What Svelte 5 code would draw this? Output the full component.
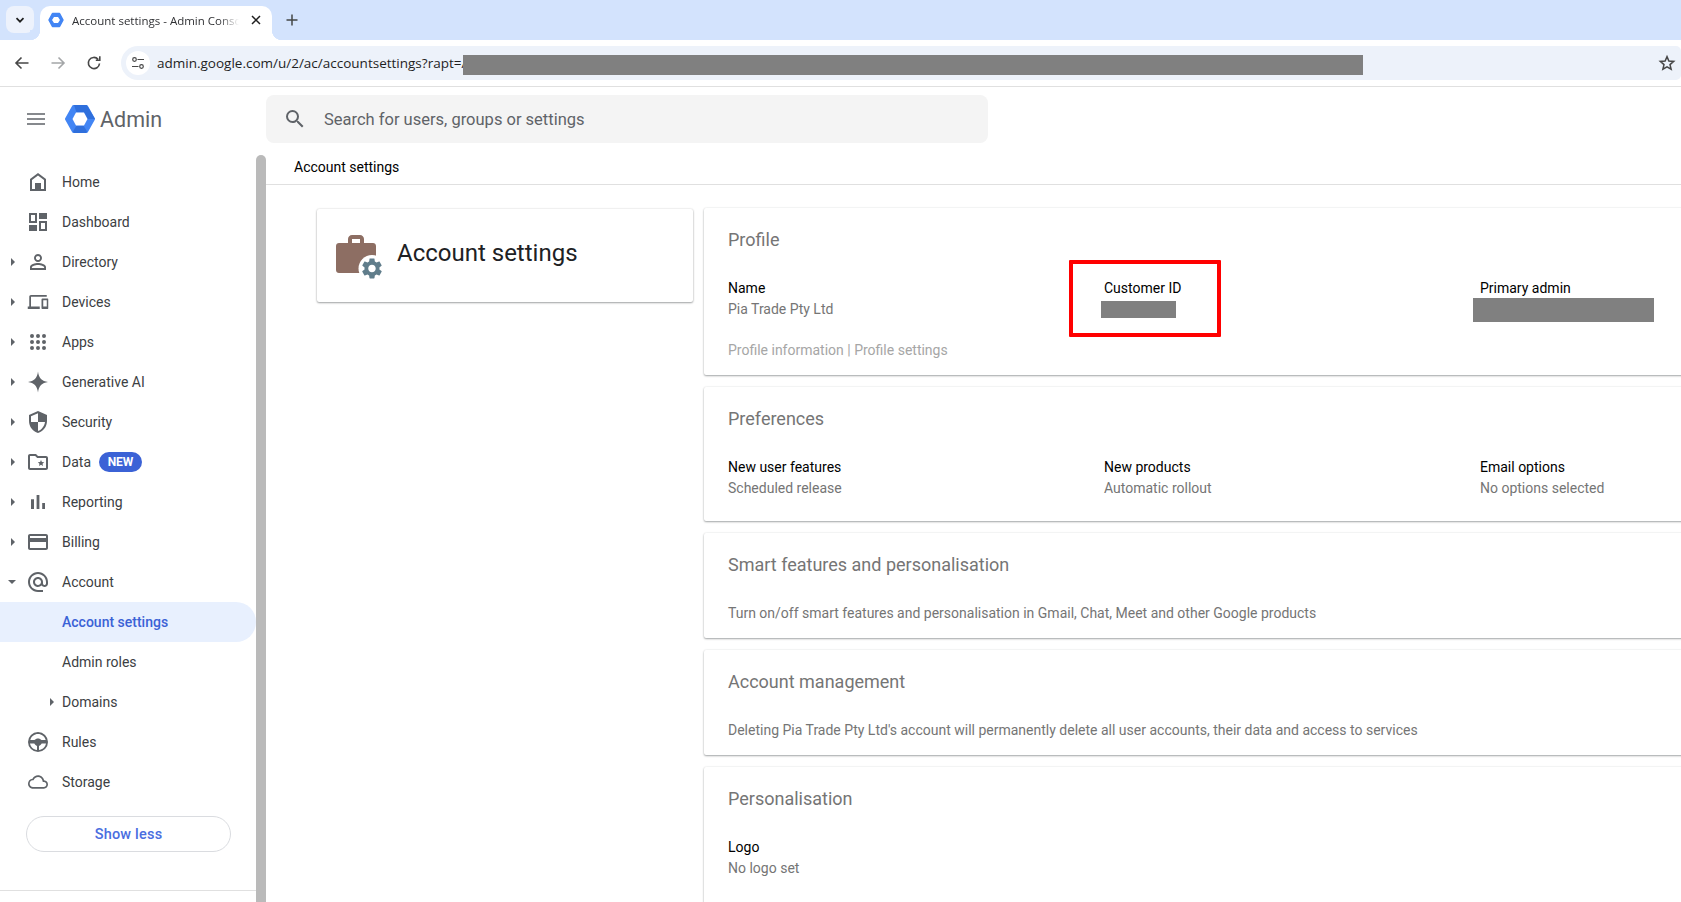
<script>
  const icons = {
    home: "M12 3 4 9v12h16V9L12 3zm0 2.400L18 10v9H6v-9l6-4.600zM9 13h6v6H9z",
    dashboard: "M3 3h8v10H3V3zm2 2v6h4V5H5zm8-2h8v6h-8V3zM3 15h8v6H3v-6zm10-4h8v10h-8V11zm2 2v6h4v-6h-4z",
    directory: "M12 5.900c1.160 0 2.100.94 2.100 2.100s-.94 2.100-2.100 2.100S9.900 9.160 9.900 8s.94-2.100 2.100-2.100m0 9c2.970 0 6.100 1.460 6.100 2.100v1.100H5.900V17c0-.64 3.130-2.100 6.100-2.100M12 4C9.790 4 8 5.790 8 8s1.790 4 4 4 4-1.790 4-4-1.790-4-4-4zm0 9c-2.670 0-8 1.340-8 4v3h16v-3c0-2.660-5.330-4-8-4z",
    devices: "M4 6h18V4H4c-1.100 0-2 .9-2 2v11H0v3h14v-3H4V6zm19 2h-6c-.55 0-1 .45-1 1v10c0 .55.45 1 1 1h6c.55 0 1-.45 1-1V9c0-.55-.45-1-1-1zm-1 9h-4v-7h4v7z",
    apps: "M6 4a2 2 0 1 0 0 4 2 2 0 0 0 0-4zm6 0a2 2 0 1 0 0 4 2 2 0 0 0 0-4zm6 0a2 2 0 1 0 0 4 2 2 0 0 0 0-4zM6 10a2 2 0 1 0 0 4 2 2 0 0 0 0-4zm6 0a2 2 0 1 0 0 4 2 2 0 0 0 0-4zm6 0a2 2 0 1 0 0 4 2 2 0 0 0 0-4zM6 16a2 2 0 1 0 0 4 2 2 0 0 0 0-4zm6 0a2 2 0 1 0 0 4 2 2 0 0 0 0-4zm6 0a2 2 0 1 0 0 4 2 2 0 0 0 0-4z",
    spark: "M12 1.500C12.700 8 16 11.300 22 12c-6 .7-9.300 4-10 10.500C11.300 16 8 12.700 2 12c6-.7 9.300-4 10-10.500z",
    security: "M12 1 3 5v6c0 5.550 3.840 10.740 9 12 5.160-1.260 9-6.450 9-12V5l-9-4zm0 10.990h7c-.53 4.120-3.280 7.790-7 8.940V12H5V6.300l7-3.110v8.800z",
    data: "M20 6h-8l-2-2H4c-1.100 0-2 .9-2 2v12c0 1.100.9 2 2 2h16c1.100 0 2-.9 2-2V8c0-1.100-.9-2-2-2zm0 12H4V6h5.170l2 2H20v10zM15 10l.9 2.100 2.300.2-1.700 1.500.5 2.200-2-1.200-2 1.200.5-2.200-1.700-1.500 2.300-.2z",
    reporting: "M5 9.200h3V19H5zM10.600 5h2.800v14h-2.800zm5.600 8H19v6h-2.800z",
    billing: "M20 4H4c-1.110 0-1.990.89-1.990 2L2 18c0 1.110.89 2 2 2h16c1.110 0 2-.89 2-2V6c0-1.110-.89-2-2-2zm0 14H4v-6h16v6zm0-10H4V6h16v2z",
    account: "M12 2C6.480 2 2 6.480 2 12s4.480 10 10 10h5v-2h-5c-4.340 0-8-3.660-8-8s3.660-8 8-8 8 3.660 8 8v1.430c0 .79-.71 1.570-1.500 1.570s-1.500-.78-1.500-1.570V12c0-2.760-2.240-5-5-5s-5 2.240-5 5 2.240 5 5 5c1.380 0 2.640-.56 3.540-1.470.65.89 1.770 1.470 2.960 1.470 1.970 0 3.500-1.600 3.500-3.570V12c0-5.520-4.480-10-10-10zm0 13c-1.660 0-3-1.340-3-3s1.340-3 3-3 3 1.340 3 3-1.340 3-3 3z",
    rules: "M12 2a10 10 0 1 0 0 20 10 10 0 0 0 0-20zm0 2c3.700 0 6.800 2.500 7.700 6h-4.200c-.9-.9-2.100-1.500-3.500-1.500S9.400 9.100 8.500 10H4.300C5.200 6.500 8.300 4 12 4zm-8 9.500h4.300c.6 1.200 1.700 2.100 2.700 2.500v4c-3.500-.4-6.300-3-7-6.500zm9 6.500v-4c1-.4 2.100-1.300 2.700-2.500H20c-.7 3.500-3.500 6.100-7 6.500z",
    storage: "M12 6c2.620 0 4.880 1.860 5.390 4.430l.3 1.500 1.530.11c1.560.1 2.780 1.410 2.780 2.960 0 1.650-1.350 3-3 3H6c-2.210 0-4-1.790-4-4 0-2.050 1.530-3.760 3.560-3.970l1.070-.11.5-.95C8.080 7.140 9.940 6 12 6m0-2C9.110 4 6.600 5.640 5.350 8.040 2.340 8.360 0 10.910 0 14c0 3.310 2.690 6 6 6h13c2.760 0 5-2.240 5-5 0-2.640-2.050-4.780-4.650-4.960C18.670 6.590 15.640 4 12 4z",
  };

  const nav = [
    { label: "Home", icon: "home" },
    { label: "Dashboard", icon: "dashboard" },
    { label: "Directory", icon: "directory", arrow: "right" },
    { label: "Devices", icon: "devices", arrow: "right", size: 21 },
    { label: "Apps", icon: "apps", arrow: "right" },
    { label: "Generative AI", icon: "spark", arrow: "right" },
    { label: "Security", icon: "security", arrow: "right" },
    { label: "Data", icon: "data", arrow: "right", badge: "NEW" },
    { label: "Reporting", icon: "reporting", arrow: "right" },
    { label: "Billing", icon: "billing", arrow: "right" },
    { label: "Account", icon: "account", arrow: "down" },
    { label: "Account settings", active: true },
    { label: "Admin roles" },
    { label: "Domains", arrow: "sub" },
    { label: "Rules", icon: "rules" },
    { label: "Storage", icon: "storage", size: 20 },
  ];

  const prefs = [
    { label: "New user features", value: "Scheduled release" },
    { label: "New products", value: "Automatic rollout" },
    { label: "Email options", value: "No options selected" },
  ];
</script>

<div class="browser">
  <div class="tabstrip">
    <button class="tabsearch" aria-label="Search tabs">
      <svg width="12" height="12" viewBox="0 0 12 12"><path d="M2.500 4.200 6 7.700l3.500-3.500" fill="none" stroke="#1f1f1f" stroke-width="1.700"/></svg>
    </button>
    <div class="tab">
      <svg class="favicon" width="16" height="16" viewBox="0 0 32 32">
        <polygon points="9,3 23,3 30,16 23,29 9,29 2,16" fill="#4285f4" stroke="#4285f4" stroke-width="3" stroke-linejoin="round"/>
        <polygon points="12,10 20,10 24,16 20,22 12,22 8,16" fill="#fff"/>
      </svg>
      <span class="tabtitle">Account settings - Admin Console</span>
      <svg class="tabclose" width="12" height="12" viewBox="0 0 12 12"><path d="M2 2l8 8M10 2l-8 8" stroke="#1f1f1f" stroke-width="1.500"/></svg>
    </div>
    <svg class="newtab" width="14" height="14" viewBox="0 0 14 14"><path d="M7 1.500v11M1.500 7h11" stroke="#444746" stroke-width="1.500"/></svg>
  </div>

  <div class="toolbar">
    <svg class="tool" width="18" height="18" viewBox="0 0 18 18"><path d="M15.500 9H3.500M8.500 3.500 3 9l5.500 5.500" fill="none" stroke="#474747" stroke-width="1.600"/></svg>
    <svg class="tool" width="18" height="18" viewBox="0 0 18 18"><path d="M2.500 9h12M9.500 3.500 15 9l-5.500 5.500" fill="none" stroke="#a4a6a8" stroke-width="1.600"/></svg>
    <svg class="tool" width="18" height="18" viewBox="0 0 18 18"><path d="M14.500 9.500a5.600 5.600 0 1 1-1.400-4.200M14.800 2.200v4h-4" fill="none" stroke="#474747" stroke-width="1.600"/></svg>
    <div class="urlbar">
      <span class="siteinfo">
        <svg width="14" height="14" viewBox="0 0 14 14" fill="none" stroke="#474747" stroke-width="1.200">
          <circle cx="3.500" cy="3.500" r="1.800"/><path d="M6.500 3.500H13M1 10.500h6.500"/><circle cx="10.500" cy="10.500" r="1.800"/>
        </svg>
      </span>
      <span class="url">admin.google.com/u/2/ac/accountsettings?rapt=A</span>
      <span class="redact urlredact"></span>
      <svg class="star" width="18" height="18" viewBox="0 0 24 24"><path d="M12 3.500l2.500 5.900 6.400.5-4.900 4.200 1.500 6.200L12 17l-5.500 3.300L8 14.100 3.100 9.900l6.400-.5z" fill="none" stroke="#474747" stroke-width="2"/></svg>
    </div>
  </div>

  <div class="page">
    <aside class="sidebar">
      <div class="brand">
        <svg class="burger" width="18" height="12" viewBox="0 0 18 12"><path d="M0 1h18M0 6h18M0 11h18" stroke="#5f6368" stroke-width="1.600"/></svg>
        <svg class="logo" width="30" height="28" viewBox="0 0 30 28">
          <polygon points="8.500,1.500 21.500,1.500 28.500,14 21.500,26.500 8.500,26.500 1.500,14" fill="#4285f4" stroke="#4285f4" stroke-width="3" stroke-linejoin="round"/>
          <polygon points="9,0 21.500,0 23,2 30,14 22,14 18.500,7.500 11.500,7.500" fill="#2f6fdc"/>
          <polygon points="11.500,20.500 18.500,20.500 22,26.500 21,28 9,28 8,26.500" fill="#2f6fdc"/>
          <polygon points="11,7.500 19,7.500 22.500,14 19,20.500 11,20.500 7.500,14" fill="#fff"/>
        </svg>
        <span class="brandname">Admin</span>
      </div>
      <nav>
        {#each nav as item}
          <div class="navrow" class:active={item.active}>
            {#if item.arrow === "right"}<span class="arrow"></span>{/if}
            {#if item.arrow === "down"}<span class="arrow down"></span>{/if}
            {#if item.arrow === "sub"}<span class="arrow sub"></span>{/if}
            {#if item.icon}
              <svg class="navicon" width={item.size ?? 24} height={item.size ?? 24} viewBox="0 0 24 24"><path fill-rule="evenodd" d={icons[item.icon]}/></svg>
            {/if}
            <span class="navlabel">{item.label}</span>
            {#if item.badge}<span class="badge">{item.badge}</span>{/if}
          </div>
        {/each}
      </nav>
      <button class="showless">Show less</button>
      <div class="sidefoot"></div>
    </aside>
    <div class="scrollbar"></div>

    <main>
      <div class="search">
        <svg width="24" height="24" viewBox="0 0 24 24"><path fill="#5f6368" d="M15.500 14h-.79l-.28-.27A6.470 6.470 0 0 0 16 9.500 6.500 6.500 0 1 0 9.500 16c1.610 0 3.090-.59 4.230-1.570l.27.28v.79l5 4.990L20.490 19l-4.990-5zm-6 0C7.010 14 5 11.990 5 9.500S7.010 5 9.500 5 14 7.010 14 9.500 11.990 14 9.500 14z"/></svg>
        <span>Search for users, groups or settings</span>
      </div>
      <div class="crumb">Account settings</div>

      <div class="content">
        <section class="herocard">
          <svg class="heroicon" width="46" height="44" viewBox="0 0 46 44">
            <path fill="#8d6e63" fill-rule="evenodd" d="M12 4c0-2.200 1.800-4 4-4h8c2.200 0 4 1.800 4 4v4h9c1.700 0 3 1.300 3 3v24c0 1.700-1.300 3-3 3H3c-1.700 0-3-1.300-3-3V11c0-1.700 1.300-3 3-3h9V4zm4 0v4h8V4h-8z"/>
            <circle cx="36" cy="33.500" r="13.500" fill="#fff"/>
            <path fill="#607d8b" transform="translate(23.500 21) scale(1.040)" d="M19.140 12.940c.04-.3.06-.61.06-.94 0-.32-.02-.64-.07-.94l2.030-1.580c.18-.14.23-.41.12-.61l-1.920-3.320c-.12-.22-.37-.29-.59-.22l-2.390.96c-.5-.38-1.030-.7-1.620-.94l-.36-2.540c-.04-.24-.24-.41-.48-.41h-3.840c-.24 0-.43.17-.47.41l-.36 2.540c-.59.24-1.130.57-1.620.94l-2.390-.96c-.22-.08-.47 0-.59.22L2.740 8.870c-.12.21-.08.47.12.61l2.030 1.580c-.05.3-.09.63-.09.94s.02.64.07.94l-2.030 1.580c-.18.14-.23.41-.12.61l1.920 3.320c.12.22.37.29.59.22l2.390-.96c.5.38 1.030.7 1.620.94l.36 2.540c.05.24.24.41.48.41h3.840c.24 0 .44-.17.47-.41l.36-2.540c.59-.24 1.130-.56 1.620-.94l2.390.96c.22.08.47 0 .59-.22l1.920-3.320c.12-.22.07-.47-.12-.61l-2.010-1.580zM12 15.600c-1.980 0-3.600-1.620-3.600-3.600s1.620-3.600 3.600-3.600 3.600 1.620 3.600 3.600-1.620 3.600-3.600 3.600z"/>
          </svg>
          <h1>Account settings</h1>
        </section>

        <div class="cards">
          <section class="card">
            <h2>Profile</h2>
            <div class="row">
              <div><div class="label">Name</div><div class="value">Pia Trade Pty Ltd</div></div>
              <div class="customer">
                <div class="label">Customer ID</div>
                <span class="redact idredact"></span>
                <span class="highlight"></span>
              </div>
              <div class="admin">
                <div class="label">Primary admin</div>
                <span class="redact adminredact"></span>
              </div>
            </div>
            <div class="links">Profile information | Profile settings</div>
          </section>

          <section class="card">
            <h2>Preferences</h2>
            <div class="row">
              {#each prefs as p}
                <div><div class="label">{p.label}</div><div class="value">{p.value}</div></div>
              {/each}
            </div>
          </section>

          <section class="card">
            <h2>Smart features and personalisation</h2>
            <div class="value">Turn on/off smart features and personalisation in Gmail, Chat, Meet and other Google products</div>
          </section>

          <section class="card">
            <h2>Account management</h2>
            <div class="value">Deleting Pia Trade Pty Ltd's account will permanently delete all user accounts, their data and access to services</div>
          </section>

          <section class="card last">
            <h2>Personalisation</h2>
            <div class="label">Logo</div>
            <div class="value">No logo set</div>
          </section>
        </div>
      </div>
    </main>
  </div>
</div>

<style>
  :global(body) {
    margin: 0;
    overflow: hidden;
  }
  .browser {
    width: 1681px;
    height: 902px;
    overflow: hidden;
    background: #fff;
    font-family: Roboto, "Liberation Sans", sans-serif;
    display: flex;
    flex-direction: column;
  }

  /* browser chrome */
  .tabstrip {
    height: 40px;
    flex: none;
    background: #d3e3fd;
    display: flex;
    align-items: flex-end;
    padding-left: 6px;
    box-sizing: border-box;
  }
  .tabsearch {
    width: 28px;
    height: 27px;
    margin-bottom: 7px;
    border: 0;
    padding: 0;
    border-radius: 8px;
    background: #edf2fc;
    display: flex;
    align-items: center;
    justify-content: center;
  }
  .tab {
    position: relative;
    width: 232px;
    height: 34px;
    margin-left: 6px;
    background: #fff;
    border-radius: 10px 10px 0 0;
    display: flex;
    align-items: center;
    padding: 0 10px 6px 8px;
    box-sizing: border-box;
    font-family: "Open Sans", sans-serif;
    font-size: 11.500px;
    color: #303134;
  }
  .tab::before,
  .tab::after {
    content: "";
    position: absolute;
    bottom: 0;
    width: 10px;
    height: 10px;
  }
  .tab::before {
    left: -10px;
    background: radial-gradient(circle at 0 0, #d3e3fd 10px, #fff 10.500px);
  }
  .tab::after {
    right: -10px;
    background: radial-gradient(circle at 100% 0, #d3e3fd 10px, #fff 10.500px);
  }
  .favicon {
    flex: none;
  }
  .tabtitle {
    margin-left: 8px;
    width: 167px;
    white-space: nowrap;
    overflow: hidden;
    -webkit-mask-image: linear-gradient(to right, #000 88%, transparent);
    mask-image: linear-gradient(to right, #000 88%, transparent);
  }
  .tabclose {
    margin-left: 11px;
    flex: none;
  }
  .newtab {
    margin: 0 0 13px 13px;
  }
  .toolbar {
    height: 46px;
    flex: none;
    display: flex;
    align-items: center;
    background: #fff;
    padding-left: 13px;
    border-bottom: 1px solid #e0e0e0;
    position: relative;
  }
  .tool {
    margin-right: 18px;
    flex: none;
  }
  .urlbar {
    flex: 1;
    height: 34px;
    background: #edf2fa;
    border-radius: 17px 5px 5px 17px;
    display: flex;
    align-items: center;
    padding-left: 5px;
    position: relative;
  }
  .siteinfo {
    width: 24px;
    height: 24px;
    border-radius: 50%;
    background: #fff;
    display: flex;
    align-items: center;
    justify-content: center;
    flex: none;
  }
  .url {
    margin-left: 7px;
    font-family: "Open Sans", sans-serif;
    font-size: 13.500px;
    color: #1f1f1f;
    white-space: nowrap;
  }
  .redact {
    position: absolute;
    background: #808080;
  }
  .urlredact {
    left: 342px;
    top: 9px;
    width: 900px;
    height: 20px;
  }
  .star {
    position: absolute;
    right: 5px;
    top: 8px;
  }

  /* page layout */
  .page {
    flex: 1;
    display: flex;
    min-height: 0;
  }
  .sidebar {
    width: 256px;
    flex: none;
    display: flex;
    flex-direction: column;
  }
  .brand {
    height: 64px;
    padding: 0 0 0 27px;
    display: flex;
    align-items: center;
    flex: none;
    margin-bottom: 10.500px;
  }
  .logo {
    margin-left: 20px;
  }
  .brandname {
    margin-left: 5px;
    font-size: 21.500px;
    color: #5f6368;
  }
  nav {
    display: flex;
    flex-direction: column;
  }
  .navrow {
    position: relative;
    height: 40px;
    display: flex;
    align-items: center;
    padding-left: 62px;
    font-size: 14px;
    color: #3c4043;
  }
  .navrow.active {
    background: #e8f0fe;
    border-radius: 0 20px 20px 0;
    color: #3b62d6;
    font-weight: 500;
  }
  .navicon {
    position: absolute;
    left: 38px;
    top: 50%;
    transform: translate(-50%, -50%);
    fill: #5f6368;
  }
  .arrow {
    position: absolute;
    left: 11px;
    top: 16px;
    border-left: 4px solid #5f6368;
    border-top: 4px solid transparent;
    border-bottom: 4px solid transparent;
  }
  .arrow.down {
    left: 8px;
    top: 18px;
    border-top: 4px solid #5f6368;
    border-left: 4px solid transparent;
    border-right: 4px solid transparent;
    border-bottom: 0;
  }
  .arrow.sub {
    left: 50px;
  }
  .badge {
    margin-left: 8px;
    width: 43px;
    height: 20px;
    border-radius: 10px;
    background: #3b62d6;
    color: #fff;
    font-size: 12px;
    font-weight: 700;
    display: flex;
    align-items: center;
    justify-content: center;
  }
  .showless {
    margin: 14.500px 0 0 26px;
    width: 205px;
    height: 36px;
    box-sizing: border-box;
    border: 1px solid #dadce0;
    border-radius: 18px;
    background: #fff;
    color: #4a6ee0;
    font: 500 14.500px Roboto, sans-serif;
    letter-spacing: 0.2px;
    padding: 0;
    flex: none;
  }
  .sidefoot {
    margin-top: 38px;
    border-top: 1px solid #e0e0e0;
    flex: none;
  }
  .scrollbar {
    width: 10px;
    flex: none;
    margin-top: 68px;
    background: #bababa;
    border-radius: 5px 5px 0 0;
  }

  /* main column */
  main {
    flex: 1;
    min-width: 0;
    overflow: hidden;
    padding-top: 8px;
  }
  .search {
    width: 722px;
    height: 48px;
    border-radius: 8px;
    background: #f4f4f4;
    display: flex;
    align-items: center;
    padding-left: 17px;
    box-sizing: border-box;
    gap: 17px;
    font-size: 16.500px;
    color: #5f6368;
  }
  .crumb {
    height: 42px;
    box-sizing: border-box;
    padding: 13px 0 0 28px;
    line-height: 22px;
    font-size: 14px;
    color: #000;
    border-bottom: 1px solid #e0e0e0;
  }
  .content {
    display: flex;
    align-items: flex-start;
    padding: 23px 0 0 51px;
    gap: 11px;
  }
  .herocard {
    width: 376px;
    height: 93px;
    margin-top: 1px;
    box-sizing: border-box;
    flex: none;
    border-radius: 2px;
    background: #fff;
    box-shadow: 0 1px 2px rgba(60, 64, 67, 0.45), 0 0 2px rgba(60, 64, 67, 0.2);
    display: flex;
    align-items: center;
    padding: 0 0 5px 19px;
    gap: 15px;
  }
  .heroicon {
    margin-top: 8px;
  }
  h1 {
    margin: 0;
    font-size: 24px;
    font-weight: 400;
    color: #202124;
  }
  .cards {
    width: 1130px;
    flex: none;
    display: flex;
    flex-direction: column;
    gap: 12px;
  }
  .card {
    background: #fff;
    border-radius: 2px;
    padding: 20px 24px 14px;
    box-shadow: 0 1px 2px rgba(60, 64, 67, 0.45), 0 0 2px rgba(60, 64, 67, 0.12);
  }
  .card.last {
    padding-bottom: 60px;
  }
  h2 {
    margin: 0 0 27px;
    height: 23px;
    line-height: 23px;
    font-size: 18px;
    font-weight: 400;
    color: #757575;
  }
  .row {
    display: grid;
    grid-template-columns: repeat(3, 376px);
    margin-bottom: 8px;
  }
  .label,
  .value,
  .links {
    font-size: 14px;
    line-height: 21px;
  }
  .label {
    color: #000;
  }
  .value {
    color: #757575;
  }
  .links {
    margin: 20px 0 0;
    color: #a6a6a6;
  }

  /* redactions and the red highlight sit over the profile row */
  .customer,
  .admin {
    position: relative;
  }
  .idredact {
    left: -3px;
    top: 23px;
    width: 75px;
    height: 17px;
  }
  .adminredact {
    left: -7px;
    top: 20px;
    width: 181px;
    height: 24px;
  }
  .highlight {
    position: absolute;
    left: -35px;
    top: -18px;
    width: 152px;
    height: 77px;
    box-sizing: border-box;
    border: 4px solid #f00;
    border-radius: 1px;
  }
</style>
